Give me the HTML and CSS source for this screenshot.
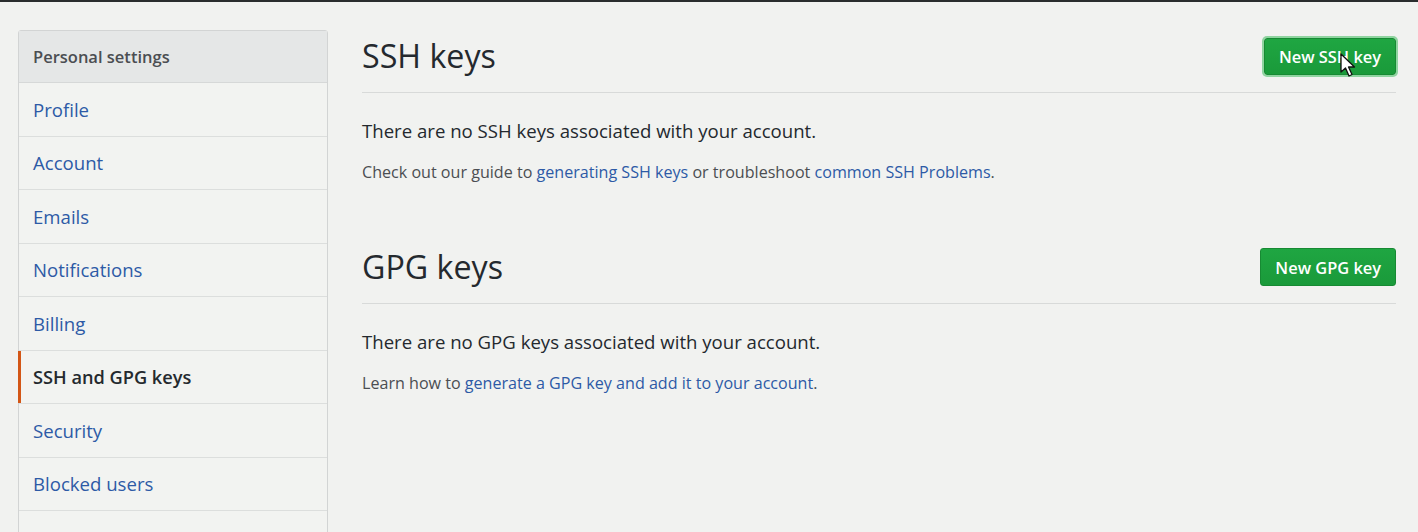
FILE: index.html
```html
<!DOCTYPE html>
<html>
<head>
<meta charset="utf-8">
<link rel="stylesheet" href="styles.css">
</head>
<body>
<div class="topbar"></div>
<div class="page">
  <nav class="menu">
    <div class="menu-head">Personal settings</div>
    <a class="menu-item">Profile</a>
    <a class="menu-item">Account</a>
    <a class="menu-item">Emails</a>
    <a class="menu-item">Notifications</a>
    <a class="menu-item">Billing</a>
    <a class="menu-item selected">SSH and GPG keys</a>
    <a class="menu-item">Security</a>
    <a class="menu-item">Blocked users</a>
    <a class="menu-item">Repositories</a>
  </nav>
  <main class="content">
    <section class="block">
      <div class="subhead">
        <h2>SSH keys</h2>
        <span class="btn-wrap">
          <a class="btn focused">New SSH key</a>
          <svg class="cursor" width="18" height="26" viewBox="0 0 18 26"><path d="M1 1 L1 19 L5.5 15 L9 23 L12 21.5 L8.5 14 L14.5 14 Z" fill="#fff" stroke="#111" stroke-width="1.3" stroke-linejoin="round"/></svg>
        </span>
      </div>
      <p class="lead">There are no SSH keys associated with your account.</p>
      <p class="note">Check out our guide to <a>generating SSH keys</a> or troubleshoot <a>common SSH Problems</a>.</p>
    </section>
    <section class="block">
      <div class="subhead">
        <h2>GPG keys</h2>
        <a class="btn">New GPG key</a>
      </div>
      <p class="lead">There are no GPG keys associated with your account.</p>
      <p class="note">Learn how to <a>generate a GPG key and add it to your account</a>.</p>
    </section>
  </main>
</div>
</body>
</html>
```
FILE: styles.css
```css
* { box-sizing: border-box; }
html, body { margin: 0; padding: 0; }
body {
  background: #f1f2f0;
  font-family: "Open Sans", "Noto Sans", sans-serif;
  color: #24292e;
  height: 532px;
  overflow: hidden;
}
.topbar { height: 2px; background: #2a2d2e; }
.page {
  display: flex;
  padding: 28px 22px 0 18px;
  gap: 34px;
}
.menu {
  width: 310px;
  flex: none;
  border: 1px solid #d2d4d4;
  border-radius: 3px;
  background: #f2f3f1;
}
.menu-head {
  height: 52px;
  background: #e5e7e7;
  border-bottom: 1px solid #d6d8d8;
  padding-left: 14px;
  display: flex;
  align-items: center;
  font-size: 16.5px;
  font-weight: 600;
  color: #4b4e52;
}
.menu-item {
  display: flex;
  align-items: center;
  height: 53.5px;
  padding-left: 14px;
  border-bottom: 1px solid #dcdedd;
  font-size: 18.6px;
  color: #2d5aa6;
  position: relative;
}
.menu-item.selected {
  color: #24292e;
  font-weight: 600;
  font-size: 18.2px;
}
.menu-item.selected::before {
  content: "";
  position: absolute;
  left: -1px; top: 0; bottom: 0;
  width: 3px;
  background: #d35616;
}
.content { flex: 1; }
.block { margin-bottom: 58px; }
.subhead {
  display: flex;
  align-items: center;
  justify-content: space-between;
  height: 63px;
  border-bottom: 1px solid #d8dad9;
  padding-bottom: 10px;
}
h2 {
  margin: 0;
  font-size: 32.2px;
  font-weight: 400;
  color: #24292e;
  line-height: 1.2;
}
.btn-wrap { position: relative; display: inline-flex; }
.btn {
  display: inline-flex;
  align-items: center;
  height: 38px;
  padding: 0 14px;
  background: linear-gradient(#1fa642, #1a9a3a);
  border: 1px solid #178a33;
  border-radius: 3px;
  color: #fff;
  font-size: 16.4px;
  font-weight: 600;
}
.btn.focused {
  box-shadow: 0 0 0 2px #8fd4a0;
  height: 37px;
}
.cursor { position: absolute; left: 76px; top: 15px; }
.lead { margin: 25px 0 0; font-size: 18.6px; }
.note { margin: 18px 0 0; font-size: 16.1px; color: #4b4e52; }
.note a { color: #2d5aa6; }
```
